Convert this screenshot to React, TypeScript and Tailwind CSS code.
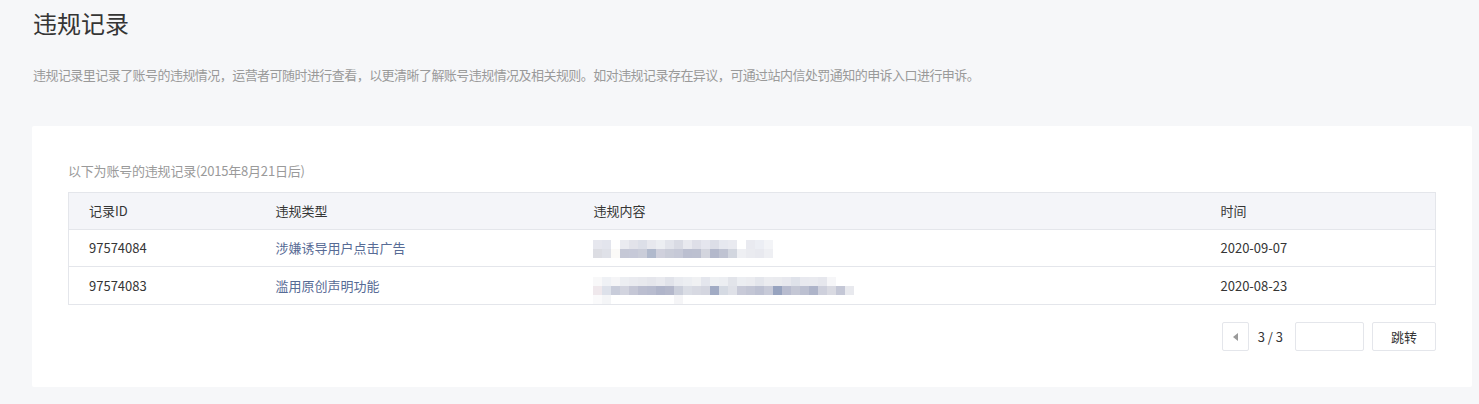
import React from "react";

// mosaic blur of the hidden content, one row of hex colours per 9px strip
const blur1 = [
  ["#e6e7ee", "#e3e5ed", "#ffffff", "#eaebf0", "#e2e3ea", "#dcdfe8", "#e7e8ee", "#eceef2", "#e2e4eb", "#d9dbe4", "#e8e9ef", "#dedfe8", "#e5e6ee", "#dcdee7", "#e6e8ef", "#e9eaf0", "#ffffff", "#e9eaf0", "#eceef4", "#f3f4f7"],
  ["#dcdde3", "#dfe1e8", "#fbfaf8", "#c5c8d6", "#c6c9d8", "#cacdd9", "#b0b9cc", "#cfd0dc", "#c9ccd8", "#c6c9d7", "#bbbfd0", "#bcc0d0", "#d3d5de", "#b3b8cb", "#bfc3d2", "#d2d6df", "#eeeff3", "#eaebf0", "#e8e9ef", "#eeeff3"],
];
const blur2 = [
  ["#f8f8f9", "#eff1f5", "#f5f5f7", "#eceef2", "#eaebf0", "#e8e9ee", "#e5e6ec", "#e9eaef", "#e1e3ea", "#e9ebf0", "#eceef2", "#f0f1f3", "#e4e6ed", "#eef0f3", "#eceef2", "#e2e4ea", "#eceef2", "#ebecf0", "#e4e6ec", "#ebecf0", "#eaebef", "#e7e8ee", "#dfe2ea", "#e8e9ef", "#e9eaef", "#e6e7ed", "#f6f6f8", "#ffffff", "#ffffff"],
  ["#efe8ec", "#dde1ea", "#c8ccda", "#d2d4df", "#c5c7d6", "#bbbed0", "#b8bccf", "#b0b5ca", "#b4b8cb", "#cbcfdb", "#dadde5", "#d7d9e2", "#d4d6e0", "#a1abc4", "#d5dae3", "#dfe1e8", "#c8cad8", "#c3c6d5", "#bdc1d2", "#c7cad8", "#97a3bf", "#b8bccf", "#c4c7d5", "#bcc0d1", "#aeb4c9", "#ced0dc", "#d9dae2", "#c4c7d6", "#e8e9ee"],
  ["#fafafb", "#f4f5f7", "#ffffff", "#ffffff", "#ffffff", "#ffffff", "#ffffff", "#ffffff", "#ffffff", "#f5f5f7", "#ffffff", "#ffffff", "#ffffff", "#ffffff", "#ffffff", "#ffffff", "#ffffff", "#ffffff", "#ffffff", "#ffffff", "#ffffff", "#ffffff", "#ffffff", "#ffffff", "#ffffff", "#ffffff", "#ffffff", "#ffffff", "#ffffff"],
];

const Mosaic = ({ rows }: { rows: string[][] }) => {
  const cols = rows[0].length;
  return (
    <svg width={cols * 9} height={rows.length * 9} className="block">
      {rows.map((r, y) =>
        r.map((c, x) => <rect key={`${x}-${y}`} x={x * 9} y={y * 9} width={9} height={9} fill={c} />)
      )}
    </svg>
  );
};

const records = [
  { id: "97574084", type: "涉嫌诱导用户点击广告", blur: blur1, date: "2020-09-07" },
  { id: "97574083", type: "滥用原创声明功能", blur: blur2, date: "2020-08-23" },
];

export default function App() {
  return (
    <div className="min-h-[404px] bg-[#f6f7f9] pl-[32px] pr-[7px] font-['Noto_Sans_CJK_SC',sans-serif] text-[#353535]">
      <h1 className="pt-[7px] pl-px text-[24px] leading-[32px] font-normal text-[#353535]">违规记录</h1>
      <p className="mt-[27px] pl-px text-[13px] leading-[18px] tracking-[-0.55px] text-[#9a9a9a]">
        违规记录里记录了账号的违规情况，运营者可随时进行查看，以更清晰了解账号违规情况及相关规则。如对违规记录存在异议，可通过站内信处罚通知的申诉入口进行申诉。
      </p>

      <div className="mt-[42px] rounded-[2px] bg-white px-[36px] pt-[36px] pb-[36px]">
        <div className="text-[13px] leading-[18px] tracking-[-0.2px] text-[#9a9a9a]">以下为账号的违规记录(2015年8月21日后)</div>

        <table className="mt-[12px] w-full table-fixed border-collapse border border-[#e4e6eb] text-[13px]">
          <colgroup>
            <col className="w-[187px]" />
            <col className="w-[318px]" />
            <col className="w-[627px]" />
            <col />
          </colgroup>
          <thead>
            <tr className="h-[37px] bg-[#f4f5f9] text-left">
              <th className="pl-[20px] font-normal">记录ID</th>
              <th className="pl-[20px] font-normal">违规类型</th>
              <th className="pl-[20px] font-normal">违规内容</th>
              <th className="pl-[20px] font-normal">时间</th>
            </tr>
          </thead>
          <tbody>
            {records.map((r) => (
              <tr key={r.id} className="h-[37px] border-t border-[#e4e6eb]">
                <td className="pl-[20px]">{r.id}</td>
                <td className="pl-[20px] text-[#576b95]">{r.type}</td>
                <td className="pl-[19px]">
                  <div className={r.blur.length === 2 ? "pt-[2px]" : "pt-[10px]"}>
                    <Mosaic rows={r.blur} />
                  </div>
                </td>
                <td className="pl-[20px]">{r.date}</td>
              </tr>
            ))}
          </tbody>
        </table>

        <div className="mt-[17px] flex items-center justify-end">
          <button className="flex h-[29px] w-[27px] items-center justify-center rounded-[2px] border border-[#e4e6eb] bg-white">
            <svg width="5" height="8" viewBox="0 0 5 8">
              <path d="M5 0 L0 4 L5 8 Z" fill="#9a9a9a" />
            </svg>
          </button>
          <span className="ml-[9px] text-[13px] leading-[18px]">3 / 3</span>
          <input className="ml-[12px] h-[29px] w-[69px] rounded-[2px] border border-[#e4e6eb] bg-white outline-none" />
          <button className="ml-[8px] h-[29px] w-[64px] rounded-[2px] border border-[#e4e6eb] bg-white text-[13px]">跳转</button>
        </div>
      </div>
    </div>
  );
}
